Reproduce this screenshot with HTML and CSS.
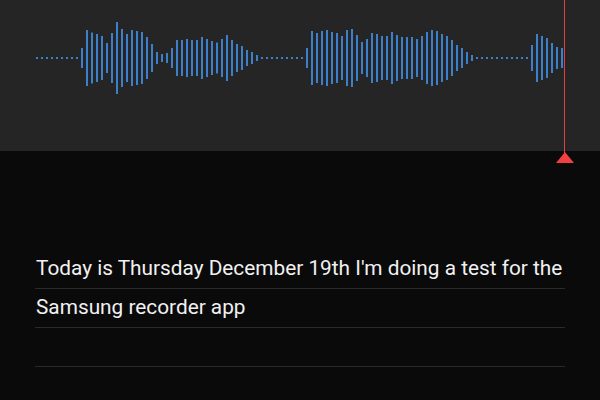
FILE: index.html
```
<!DOCTYPE html>
<html lang="en">
<head>
<meta charset="utf-8">
<title>Recorder</title>
<link rel="stylesheet" href="styles.css">
</head>
<body>
<main class="app">
  <section class="wave-panel">
    <svg class="wave" width="600" height="151" viewBox="0 0 600 151" xmlns="http://www.w3.org/2000/svg">
      <g class="bars">
        <rect x="36" y="57" width="2" height="2"/><rect x="41" y="57" width="2" height="2"/><rect x="46" y="57" width="2" height="2"/><rect x="51" y="57" width="2" height="2"/><rect x="56" y="57" width="2" height="2"/><rect x="61" y="57" width="2" height="2"/><rect x="66" y="57" width="2" height="2"/><rect x="71" y="57" width="2" height="2"/><rect x="76" y="57" width="2" height="2"/>
        <rect x="81" y="48" width="2" height="20"/>
        <rect x="86" y="30" width="2" height="56"/>
        <rect x="91" y="32.5" width="2" height="51"/>
        <rect x="96" y="34" width="2" height="48"/>
        <rect x="101" y="36" width="2" height="44"/>
        <rect x="106" y="43" width="2" height="30"/>
        <rect x="111" y="33" width="2" height="50"/>
        <rect x="116" y="22" width="2" height="72"/>
        <rect x="121" y="29" width="2" height="58"/>
        <rect x="126" y="34" width="2" height="48"/>
        <rect x="131" y="30" width="2" height="56"/>
        <rect x="136" y="31" width="2" height="54"/>
        <rect x="141" y="32" width="2" height="52"/>
        <rect x="146" y="37" width="2" height="42"/>
        <rect x="151" y="44" width="2" height="28"/>
        <rect x="156" y="52" width="2" height="12"/>
        <rect x="161" y="54" width="2" height="8"/>
        <rect x="166" y="53" width="2" height="10"/>
        <rect x="171" y="48" width="2" height="20"/>
        <rect x="176" y="40" width="2" height="36"/>
        <rect x="181" y="40" width="2" height="36"/>
        <rect x="186" y="39" width="2" height="38"/>
        <rect x="191" y="40" width="2" height="36"/>
        <rect x="196" y="40" width="2" height="36"/>
        <rect x="201" y="37" width="2" height="42"/>
        <rect x="206" y="39" width="2" height="38"/>
        <rect x="211" y="41" width="2" height="34"/>
        <rect x="216" y="42.5" width="2" height="31"/>
        <rect x="221" y="39" width="2" height="38"/>
        <rect x="226" y="35" width="2" height="46"/>
        <rect x="231" y="40" width="2" height="36"/>
        <rect x="236" y="44" width="2" height="28"/>
        <rect x="241" y="46" width="2" height="24"/>
        <rect x="246" y="50" width="2" height="16"/>
        <rect x="251" y="52" width="2" height="12"/>
        <rect x="256" y="55" width="2" height="6"/>
        <rect x="261" y="57" width="2" height="2"/><rect x="266" y="57" width="2" height="2"/><rect x="271" y="57" width="2" height="2"/><rect x="276" y="57" width="2" height="2"/><rect x="281" y="57" width="2" height="2"/><rect x="286" y="57" width="2" height="2"/><rect x="291" y="57" width="2" height="2"/><rect x="296" y="57" width="2" height="2"/><rect x="301" y="57" width="2" height="2"/>
        <rect x="306" y="48" width="2" height="20"/>
        <rect x="311" y="31" width="2" height="54"/>
        <rect x="316" y="33" width="2" height="50"/>
        <rect x="321" y="31" width="2" height="54"/>
        <rect x="326" y="30" width="2" height="56"/>
        <rect x="331" y="32" width="2" height="52"/>
        <rect x="336" y="33" width="2" height="50"/>
        <rect x="341" y="36" width="2" height="44"/>
        <rect x="346" y="30" width="2" height="56"/>
        <rect x="351" y="29" width="2" height="58"/>
        <rect x="356" y="35" width="2" height="46"/>
        <rect x="361" y="42" width="2" height="32"/>
        <rect x="366" y="39" width="2" height="38"/>
        <rect x="371" y="33" width="2" height="50"/>
        <rect x="376" y="34" width="2" height="48"/>
        <rect x="381" y="36" width="2" height="44"/>
        <rect x="386" y="36" width="2" height="44"/>
        <rect x="391" y="32" width="2" height="52"/>
        <rect x="396" y="35" width="2" height="46"/>
        <rect x="401" y="37" width="2" height="42"/>
        <rect x="406" y="37" width="2" height="42"/>
        <rect x="411" y="37" width="2" height="42"/>
        <rect x="416" y="39" width="2" height="38"/>
        <rect x="421" y="36" width="2" height="44"/>
        <rect x="426" y="32" width="2" height="52"/>
        <rect x="431" y="30" width="2" height="56"/>
        <rect x="436" y="31" width="2" height="54"/>
        <rect x="441" y="34" width="2" height="48"/>
        <rect x="446" y="36" width="2" height="44"/>
        <rect x="451" y="40" width="2" height="36"/>
        <rect x="456" y="45" width="2" height="26"/>
        <rect x="461" y="48" width="2" height="20"/>
        <rect x="466" y="52" width="2" height="12"/>
        <rect x="471" y="55" width="2" height="6"/>
        <rect x="476" y="57" width="2" height="2"/><rect x="481" y="57" width="2" height="2"/><rect x="486" y="57" width="2" height="2"/><rect x="491" y="57" width="2" height="2"/><rect x="496" y="57" width="2" height="2"/><rect x="501" y="57" width="2" height="2"/><rect x="506" y="57" width="2" height="2"/><rect x="511" y="57" width="2" height="2"/><rect x="516" y="57" width="2" height="2"/><rect x="521" y="57" width="2" height="2"/><rect x="526" y="57" width="2" height="2"/>
        <rect x="531" y="45" width="2" height="26"/>
        <rect x="536" y="34" width="2" height="48"/>
        <rect x="541" y="36" width="2" height="44"/>
        <rect x="546" y="38" width="2" height="40"/>
        <rect x="551" y="43" width="2" height="30"/>
        <rect x="556" y="47" width="2" height="22"/>
        <rect x="561" y="48" width="2" height="20"/>
      </g>
    </svg>
    <div class="playhead">
      <svg class="playhead-tip" width="18" height="11" viewBox="0 0 18 11" xmlns="http://www.w3.org/2000/svg">
        <polygon points="9,0 18,11 0,11"/>
      </svg>
    </div>
  </section>
  <section class="transcript">
    <div class="line">Today is Thursday December 19th I'm doing a test for the</div>
    <div class="line">Samsung recorder app</div>
    <div class="line"></div>
  </section>
</main>
</body>
</html>
```

FILE: styles.css
```
html, body {
  margin: 0;
  padding: 0;
  background: #0a0a0a;
  width: 600px;
  height: 400px;
  overflow: hidden;
}

.app {
  display: flex;
  flex-direction: column;
  font-family: Roboto, "Noto Sans", "Liberation Sans", sans-serif;
}

.wave-panel {
  position: relative;
  height: 151px;
  background: #252525;
}

.wave {
  display: block;
}

.bars rect {
  fill: #3c80cc;
}

.playhead {
  position: absolute;
  left: 563.5px;
  top: 0;
  width: 1.8px;
  height: 153px;
  background: #e2403f;
}

.playhead-tip {
  position: absolute;
  left: -8px;
  top: 152px;
  display: block;
}

.playhead-tip polygon {
  fill: #f0403f;
}

.transcript {
  display: flex;
  flex-direction: column;
  padding: 99px 35px 0 35px;
}

.line {
  height: 38px;
  line-height: 37px;
  padding-left: 1px;
  font-size: 20.8px;
  color: #f1f1f1;
  border-bottom: 1px solid #2a2a2a;
  white-space: nowrap;
}
```
